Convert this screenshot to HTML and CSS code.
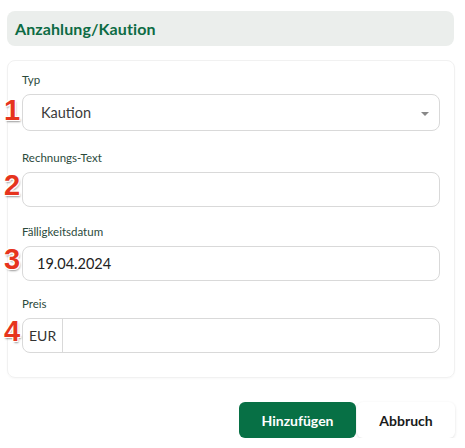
FILE: index.html
```html
<!DOCTYPE html>
<html lang="de">
<head>
<meta charset="utf-8">
<link rel="stylesheet" href="styles.css">
</head>
<body>
<div class="page">
  <div class="header"><h1>Anzahlung/Kaution</h1></div>
  <div class="card">
    <div class="field first">
      <label>Typ</label>
      <div class="control select">
        <span class="value">Kaution</span>
        <span class="caret"></span>
        <span class="badge">1</span>
      </div>
    </div>
    <div class="field">
      <label>Rechnungs-Text</label>
      <div class="control">
        <span class="badge">2</span>
      </div>
    </div>
    <div class="field">
      <label>Fälligkeitsdatum</label>
      <div class="control date">
        <span class="value">19.04.2024</span>
        <span class="badge">3</span>
      </div>
    </div>
    <div class="field last">
      <label>Preis</label>
      <div class="control group">
        <span class="addon">EUR</span>
        <span class="badge">4</span>
      </div>
    </div>
  </div>
  <div class="actions">
    <button class="btn primary">Hinzufügen</button>
    <button class="btn secondary">Abbruch</button>
  </div>
</div>
</body>
</html>
```

FILE: styles.css
```css
* { box-sizing: border-box; }
html, body { margin: 0; background: #fff; }
body { font-family: Lato, "Open Sans", sans-serif; color: #333; }
.page { padding: 11px 10px 0 7px; width: 465px; }
.header {
  background: #ebeeec;
  border-radius: 8px;
  height: 35px;
  display: flex;
  align-items: center;
  padding-left: 8px;
  width: 447px;
}
.header h1 {
  margin: 0;
  font-size: 16px;
  font-weight: 700;
  color: #0d6b44;
  letter-spacing: 0.1px;
}
.card {
  margin-top: 14px;
  width: 448px;
  border: 1px solid #f1f1f1;
  border-radius: 8px;
  padding: 12px 14px 24px 14px;
  display: flex;
  flex-direction: column;
  gap: 18px;
  box-shadow: 0 1px 2px rgba(0,0,0,0.03);
}
.field { display: flex; flex-direction: column; gap: 7px; }
.field.first { margin-bottom: 2px; }
.field.last { margin-top: -2px; }
.field label {
  font-size: 11.5px;
  color: #2b4a3c;
  line-height: 14px;
}
.control {
  position: relative;
  height: 35px;
  border: 1px solid #d9d9d9;
  border-radius: 8px;
  display: flex;
  align-items: center;
  font-size: 14.5px;
  color: #3b3b3b;
}
.select { height: 37px; }
.select .value { padding-left: 18px; }
.date .value { padding-left: 14px; color: #222; }
.caret {
  position: absolute;
  right: 10px;
  top: 17px;
  width: 0; height: 0;
  border-left: 4px solid transparent;
  border-right: 4px solid transparent;
  border-top: 4px solid #888;
}
.group .addon {
  height: 100%;
  display: flex;
  align-items: center;
  padding: 0 6px;
  border-right: 1px solid #d9d9d9;
  font-size: 14px;
  color: #333;
}
.badge {
  position: absolute;
  left: -19px;
  top: -2px;
  font-family: "Liberation Sans", Arial, sans-serif;
  font-weight: 700;
  font-size: 29px;
  line-height: 28px;
  color: #e6341d;
  text-shadow: -1px -1px 0 #fff, 1px -1px 0 #fff, -1px 1px 0 #fff, 1px 1px 0 #fff, 1px 2px 2px rgba(0,0,0,0.4);
}
.select .badge { top: 1px; }
.actions {
  display: flex;
  justify-content: flex-end;
  margin-top: 24px;
}
.btn {
  font-family: Lato, sans-serif;
  font-weight: 700;
  font-size: 14px;
  height: 36px;
  border: none;
  border-radius: 6px;
  cursor: pointer;
}
.primary { background: #077045; color: #fff; width: 117px; }
.secondary {
  background: #fff;
  color: #1a1a1a;
  width: 98px;
  margin-left: 1px;
  box-shadow: 0 1px 3px rgba(0,0,0,0.12);
}
```
